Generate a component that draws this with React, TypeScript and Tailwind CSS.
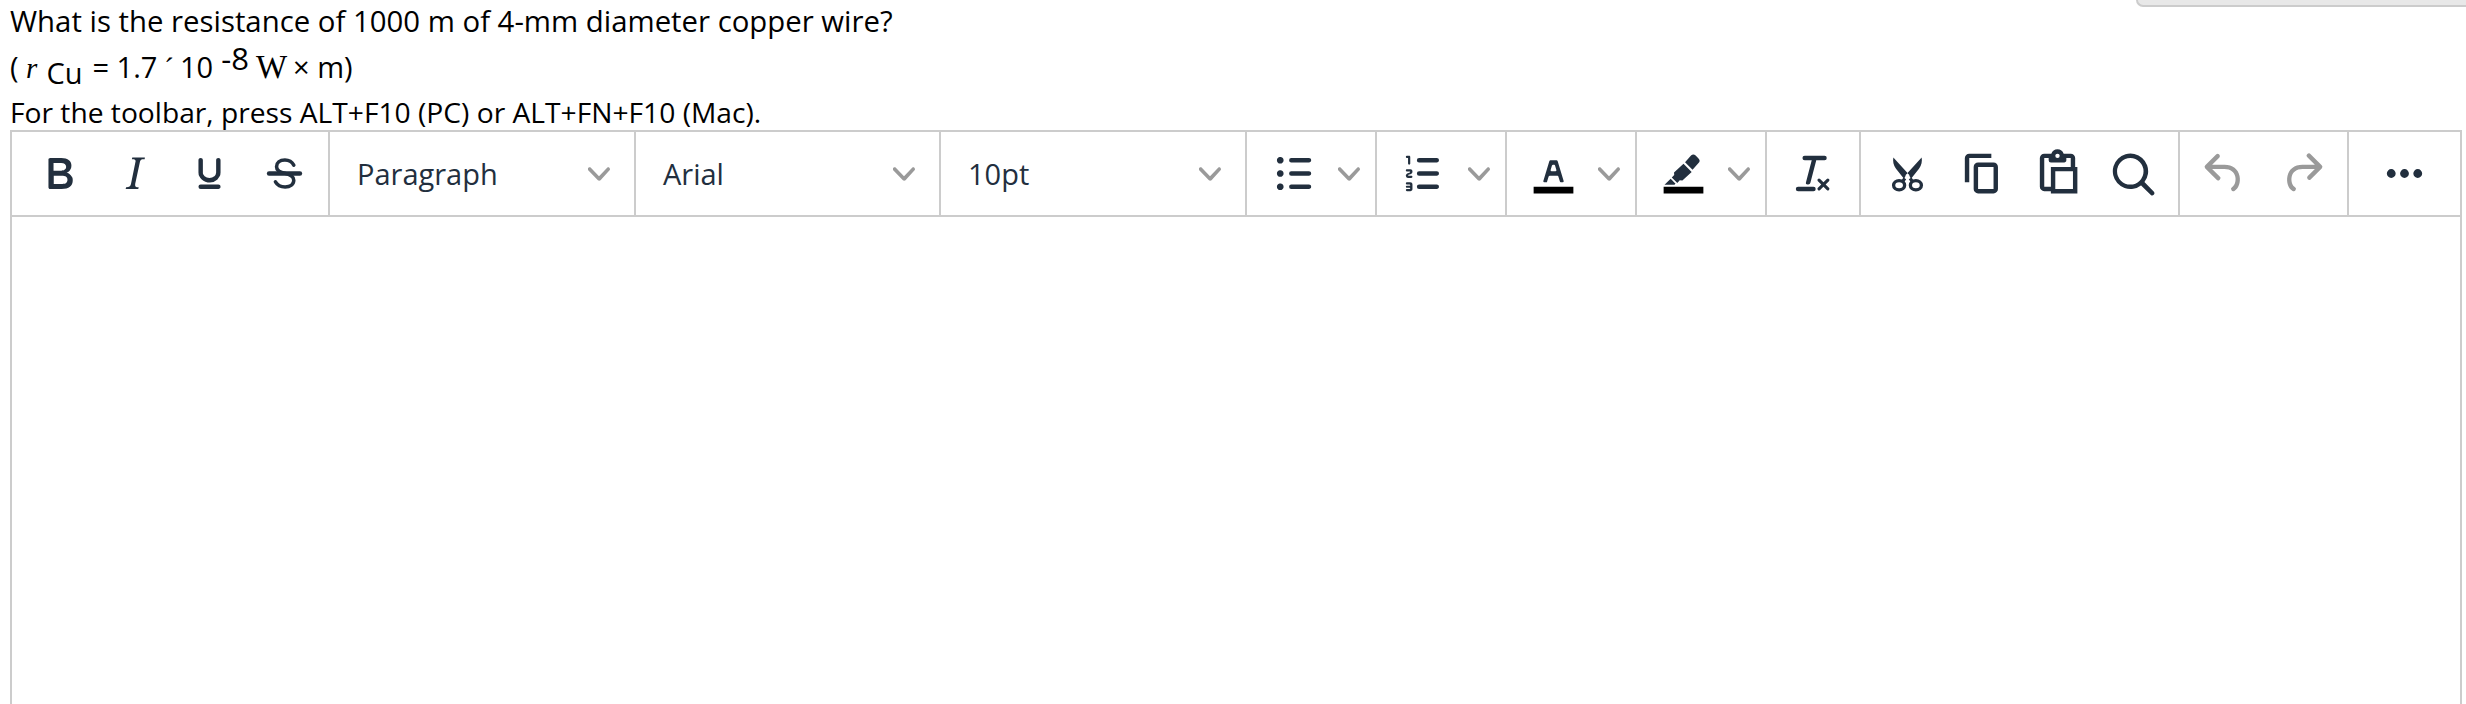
import React from "react";

const ink = "#222f3e";
const gray = "#9a9a9a";

function Icon({ d, fill = ink, evenodd = false }: { d: string; fill?: string; evenodd?: boolean }) {
  return (
    <svg width="53" height="53" viewBox="0 0 24 24" className="shrink-0">
      <path d={d} fill={fill} fillRule={evenodd ? "evenodd" : "nonzero"} />
    </svg>
  );
}

function Chevron() {
  return (
    <svg width="22" height="22" viewBox="0 0 10 10" className="shrink-0">
      <path d="M8.7 2.2c.3-.3.8-.3 1 0 .4.4.4.9 0 1.2L5.7 7.8c-.3.3-.9.3-1.2 0L.2 3.4a.8.8 0 0 1 0-1.2c.3-.3.8-.3 1.1 0L5 6l3.7-3.8z" fill={gray} />
    </svg>
  );
}

const P = {
  bold: "M7.8 19c-.3 0-.5 0-.6-.2l-.2-.5V5.7c0-.2 0-.4.2-.5l.6-.2h5c1.5 0 2.7.3 3.5 1 .7.6 1.1 1.4 1.1 2.5a3 3 0 0 1-.6 1.9c-.4.6-1 1-1.6 1.2.4.1.9.3 1.3.6s.8.7 1 1.2c.4.4.5 1 .5 1.6 0 1.3-.4 2.3-1.3 3-.8.7-2.1 1-3.8 1H7.8zm5-8.3c.6 0 1.2-.1 1.6-.5.4-.3.6-.7.6-1.3 0-1.1-.8-1.7-2.3-1.7H9.3v3.5h3.4zm.5 6c.7 0 1.3-.1 1.7-.4.4-.4.6-.9.6-1.5s-.2-1-.7-1.4c-.4-.3-1-.4-2-.4H9.4v3.8h4z",
  italic: "M16.7 4.7l-.1.9h-.3c-.6 0-1 0-1.4.3-.3.3-.4.6-.5 1.1l-2.1 9.8v.6c0 .5.4.8 1.4.8h.2l-.2.8H8l.2-.8h.2c1.1 0 1.8-.5 2-1.5l2-9.8.1-.5c0-.6-.4-.8-1.4-.8h-.3l.2-.9h5.8z",
  underline: "M16 5c.6 0 1 .4 1 1v5.5a4 4 0 0 1-.4 1.8l-1 1.4a5.3 5.3 0 0 1-5.5 1 5 5 0 0 1-1.6-1c-.5-.4-.8-.9-1.1-1.4a4 4 0 0 1-.4-1.8V6c0-.6.4-1 1-1s1 .4 1 1v5.5c0 .3 0 .6.2 1l.6.7a3.3 3.3 0 0 0 2.2.8 3.4 3.4 0 0 0 2.2-.8c.3-.2.4-.5.6-.8l.2-.9V6c0-.6.4-1 1-1zM8 17h8c.6 0 1 .4 1 1s-.4 1-1 1H8a1 1 0 0 1 0-2z",
  bul: "M11 5h8c.6 0 1 .4 1 1s-.4 1-1 1h-8a1 1 0 0 1 0-2zm0 6h8c.6 0 1 .4 1 1s-.4 1-1 1h-8a1 1 0 0 1 0-2zm0 6h8c.6 0 1 .4 1 1s-.4 1-1 1h-8a1 1 0 0 1 0-2zM4.5 6c0-.4.1-.8.4-1 .3-.4.7-.5 1.1-.5s.8.1 1 .4c.4.3.5.7.5 1.1s-.1.8-.4 1c-.3.4-.7.5-1.1.5s-.8-.1-1-.4c-.4-.3-.5-.7-.5-1.1zm0 6c0-.4.1-.8.4-1 .3-.4.7-.5 1.1-.5s.8.1 1 .4c.4.3.5.7.5 1.1s-.1.8-.4 1c-.3.4-.7.5-1.1.5s-.8-.1-1-.4c-.4-.3-.5-.7-.5-1.1zm0 6c0-.4.1-.8.4-1 .3-.4.7-.5 1.1-.5s.8.1 1 .4c.4.3.5.7.5 1.1s-.1.8-.4 1c-.3.4-.7.5-1.1.5s-.8-.1-1-.4c-.4-.3-.5-.7-.5-1.1z",
  num: "M10 17h8c.6 0 1 .4 1 1s-.4 1-1 1h-8a1 1 0 0 1 0-2zm0-6h8c.6 0 1 .4 1 1s-.4 1-1 1h-8a1 1 0 0 1 0-2zm0-6h8c.6 0 1 .4 1 1s-.4 1-1 1h-8a1 1 0 1 1 0-2zM6 4v3.5c0 .3-.2.5-.5.5a.5.5 0 0 1-.5-.5V5h-.5a.5.5 0 0 1 0-1H5.5c.3 0 .5.2.5.5zm-1 8.8l.2.2h1.3c.3 0 .5.2.5.5s-.2.5-.5.5H4.9a1 1 0 0 1-.9-1V13c0-.4.3-.8.6-1l1.2-.4.2-.3a.2.2 0 0 0-.2-.2H4.5a.5.5 0 0 1-.5-.5c0-.3.2-.5.5-.5h1.6c.5 0 .9.4.9 1v.1c0 .4-.3.8-.6 1l-1.2.4-.2.3zM7 17v2c0 .6-.4 1-1 1H4.5a.5.5 0 0 1 0-1h1.2c.2 0 .3-.1.3-.3 0-.2-.1-.3-.3-.3H4.4a.4.4 0 1 1 0-.8h1.3c.2 0 .3-.1.3-.3 0-.2-.1-.3-.3-.3H4.5a.5.5 0 1 1 0-1H6c.6 0 1 .4 1 1z",
  forecolor: "M8.7 16h-.8a.5.5 0 0 1-.5-.6l2.7-9c.1-.3.3-.4.5-.4h2.8c.2 0 .4.1.5.4l2.7 9a.5.5 0 0 1-.5.6h-.8a.5.5 0 0 1-.4-.4l-.7-2.2c0-.3-.3-.4-.5-.4h-3.4c-.2 0-.4.1-.5.4l-.7 2.2c0 .3-.2.4-.4.4zm2.6-7.6l-.6 2a.5.5 0 0 0 .5.6h1.6a.5.5 0 0 0 .5-.6l-.6-2c0-.3-.3-.4-.5-.4h-.4c-.2 0-.4.1-.5.4z",
  clear: "M13.2 6a1 1 0 0 1 0 .2l-2.6 10a1 1 0 0 1-1 .8h-.2a.8.8 0 0 1-.8-1l2.6-10H8a1 1 0 1 1 0-2h9a1 1 0 0 1 0 2h-3.8zM5 18h7a1 1 0 0 1 0 2H5a1 1 0 0 1 0-2zm13 1.5L16.5 18 15 19.5a.7.7 0 0 1-1-1l1.5-1.5-1.5-1.5a.7.7 0 0 1 1-1l1.5 1.5 1.5-1.5a.7.7 0 0 1 1 1L17.5 17l1.5 1.5a.7.7 0 0 1-1 1z",
  copy: "M16 3H6a2 2 0 0 0-2 2v11h2V5h10V3zm1 4a2 2 0 0 1 2 2v10a2 2 0 0 1-2 2h-7a2 2 0 0 1-2-2V9c0-1.2.9-2 2-2h7zm0 12V9h-7v10h7z",
  paste: "M9 20H6a2 2 0 0 1-2-2V5c0-1.1.9-2 2-2h3.2A3 3 0 0 1 12 1a3 3 0 0 1 2.8 2H18a2 2 0 0 1 2 2v4h1v12H9v-1zM18 9V5h-2v1c0 .6-.4 1-1 1H9a1 1 0 0 1-1-1V5H6v13h3V9h9zM11 11v8h8v-8h-8zM12 3a1 1 0 1 0 0 2 1 1 0 0 0 0-2z",
  search: "M16 17.3a8 8 0 1 1 1.4-1.4l4.3 4.4a1 1 0 0 1-1.4 1.4l-4.4-4.3zm-5-.3a6 6 0 1 0 0-12 6 6 0 0 0 0 12z",
  undo: "M6.4 8H12c3.7 0 6.2 2 6.8 5.1.6 2.7-.4 5.6-2.3 6.8a1 1 0 0 1-1-1.8c1.1-.6 1.8-2.7 1.4-4.6-.5-2.1-2.1-3.5-4.9-3.5H6.4l3.3 3.3a1 1 0 1 1-1.4 1.4l-5-5a1 1 0 0 1 0-1.4l5-5a1 1 0 0 1 1.4 1.4L6.4 8z",
  redo: "M17.6 10H12c-2.8 0-4.4 1.4-4.9 3.5-.4 2 .3 4 1.4 4.6a1 1 0 1 1-1 1.8c-2-1.2-2.9-4.1-2.3-6.8.6-3 3-5.1 6.8-5.1h5.6l-3.3-3.3a1 1 0 1 1 1.4-1.4l5 5a1 1 0 0 1 0 1.4l-5 5a1 1 0 0 1-1.4-1.4l3.3-3.3z",
  more: "M6 10a2 2 0 0 0-2 2c0 1.1.9 2 2 2a2 2 0 0 0 2-2 2 2 0 0 0-2-2zm12 0a2 2 0 0 0-2 2c0 1.1.9 2 2 2a2 2 0 0 0 2-2 2 2 0 0 0-2-2zm-6 0a2 2 0 0 0-2 2c0 1.1.9 2 2 2a2 2 0 0 0 2-2 2 2 0 0 0-2-2z",
};

function Strike() {
  return (
    <svg width="53" height="53" viewBox="0 0 24 24" className="shrink-0">
      <path d="M16.2 8.2C15.4 6.7 14 5.9 12.2 5.9 9.8 5.9 8.4 7.2 8.4 8.9c0 1.7 1.5 2.5 3.8 3 2.7.6 4 1.5 4 3.2 0 1.8-1.6 3-3.9 3-2 0-3.6-.9-4.4-2.3" fill="none" stroke={ink} strokeWidth="1.6" strokeLinecap="round" />
      <path d="M5 11h14a1 1 0 0 1 0 2H5a1 1 0 0 1 0-2z" fill={ink} />
    </svg>
  );
}

function Fore() {
  return (
    <svg width="53" height="53" viewBox="0 0 24 24" className="shrink-0">
      <path d="M3 18h18v3H3z" fill="#000" />
      <path d={P.forecolor} fill={ink} />
    </svg>
  );
}

function Highlight() {
  return (
    <svg width="53" height="53" viewBox="0 0 24 24" className="shrink-0">
      <path d="M3 18h18v3H3z" fill="#000" />
      <path d="M15.4 3.9a1.5 1.5 0 0 1 2.1 0l1.3 1.3a1.5 1.5 0 0 1 0 2.1l-2.7 3-3.4-3.4 2.7-3zM12 7.6l3.7 3.7-4.2 3.9-1.2-.1-1.1 1.2-2.5-2.5 1.1-1.1-.1-1.2 4.3-3.9zM6.2 14.4l2.2 2.2-.5.5H3.4l2.8-2.7z" fill={ink} />
    </svg>
  );
}

function Cut() {
  return (
    <svg width="53" height="53" viewBox="0 0 24 24" className="shrink-0">
      <path d="M5.6 4.8l6.4 7-1.6 2.6-3.6-4.6C5.6 8.400 5.300 6.400 5.600 4.800zM18.400 4.800c.3 1.600 0 3.600-1.200 5l-3.600 4.600-1.600-2.600 6.400-7z" fill={ink} />
      <ellipse cx="8.200" cy="17.300" rx="2.500" ry="2.100" fill="none" stroke={ink} strokeWidth="1.500" />
      <ellipse cx="15.800" cy="17.300" rx="2.500" ry="2.100" fill="none" stroke={ink} strokeWidth="1.500" />
      <path d="M9.800 15.600l1-1.400M14.200 15.600l-1-1.400" stroke={ink} strokeWidth="1.500" fill="none" />
      <circle cx="12" cy="13.100" r="0.900" fill="#fff" />
    </svg>
  );
}

const Btn = ({ children }: { children: React.ReactNode }) => (
  <div className="w-[75px] h-full flex items-center justify-center shrink-0">{children}</div>
);

const Select = ({ label, width }: { label: string; width: string }) => (
  <div className={`${width} h-full shrink-0 border-r-2 border-[#cccccc] flex items-center justify-between pl-[27px] pr-[24px]`}>
    <span className="text-[29px] leading-none text-[#222f3e]">{label}</span>
    <Chevron />
  </div>
);

const Split = ({ children, width }: { children: React.ReactNode; width: string }) => (
  <div className={`${width} h-full shrink-0 border-r-2 border-[#cccccc] flex items-center pl-[20px] gap-[18px]`}>
    {children}
    <Chevron />
  </div>
);

export default function App() {
  return (
    <div className="relative w-[2466px] h-[704px] overflow-hidden bg-white flex flex-col font-['Open_Sans',sans-serif]">
      <div className="absolute top-0 right-0 w-[330px] h-[7px] bg-[#e8e8e8] border-b-2 border-l-2 border-[#cccccc] rounded-bl-[8px]" />
      <div className="pl-[10px] text-black -mt-[2px]">
        <div className="whitespace-nowrap text-[29.35px] leading-[46px]">What is the resistance of 1000 m of 4-mm diameter copper wire?</div>
        <div className="whitespace-nowrap flex items-baseline h-[45px] text-[29px] leading-[45px]">
          <span>(&nbsp;</span>
          <span className="font-['Liberation_Serif',serif] italic">r</span>
          <span className="relative top-[6px] ml-[9px] leading-none">Cu</span>
          <span className="ml-[10px]">= 1.7</span>
          <span className="ml-[7px] font-['Liberation_Serif',serif]">´</span>
          <span className="ml-[6px]">10</span>
          <span className="relative -top-[8px] ml-[8px] text-[31px] leading-none">-8</span>
          <span className="ml-[7px] text-[33px] font-['Liberation_Serif',serif]">W</span>
          <span className="ml-[6px]">× m)</span>
        </div>
        <div className="whitespace-nowrap text-[28.2px] leading-[46px]">For the toolbar, press ALT+F10 (PC) or ALT+FN+F10 (Mac).</div>
      </div>
      <div className="ml-[10px] mr-[4px] flex-1 border-2 border-b-0 border-[#cccccc] -mt-[5px]">
        <div className="h-[85px] border-b-2 border-[#cccccc] flex items-center">
          <div className="w-[318px] h-full shrink-0 border-r-2 border-[#cccccc] flex items-center pl-[10px]">
            <Btn><Icon d={P.bold} /></Btn>
            <Btn><Icon d={P.italic} /></Btn>
            <Btn><Icon d={P.underline} /></Btn>
            <Btn><Strike /></Btn>
          </div>
          <Select label="Paragraph" width="w-[306px]" />
          <Select label="Arial" width="w-[305px]" />
          <Select label="10pt" width="w-[306px]" />
          <Split width="w-[130px]"><Icon d={P.bul} /></Split>
          <Split width="w-[130px]"><Icon d={P.num} /></Split>
          <Split width="w-[130px]"><Fore /></Split>
          <Split width="w-[130px]"><Highlight /></Split>
          <div className="w-[94px] h-full shrink-0 border-r-2 border-[#cccccc] flex items-center justify-center">
            <Icon d={P.clear} />
          </div>
          <div className="w-[319px] h-full shrink-0 border-r-2 border-[#cccccc] flex items-center pl-[9px]">
            <Btn><Cut /></Btn>
            <Btn><Icon d={P.copy} /></Btn>
            <Btn><Icon d={P.paste} evenodd /></Btn>
            <Btn><Icon d={P.search} /></Btn>
          </div>
          <div className="w-[169px] h-full shrink-0 border-r-2 border-[#cccccc] flex items-center justify-center gap-[25px]">
            <Icon d={P.undo} fill={gray} />
            <Icon d={P.redo} fill={gray} />
          </div>
          <div className="flex-1 h-full flex items-center justify-center">
            <Icon d={P.more} />
          </div>
        </div>
      </div>
    </div>
  );
}
